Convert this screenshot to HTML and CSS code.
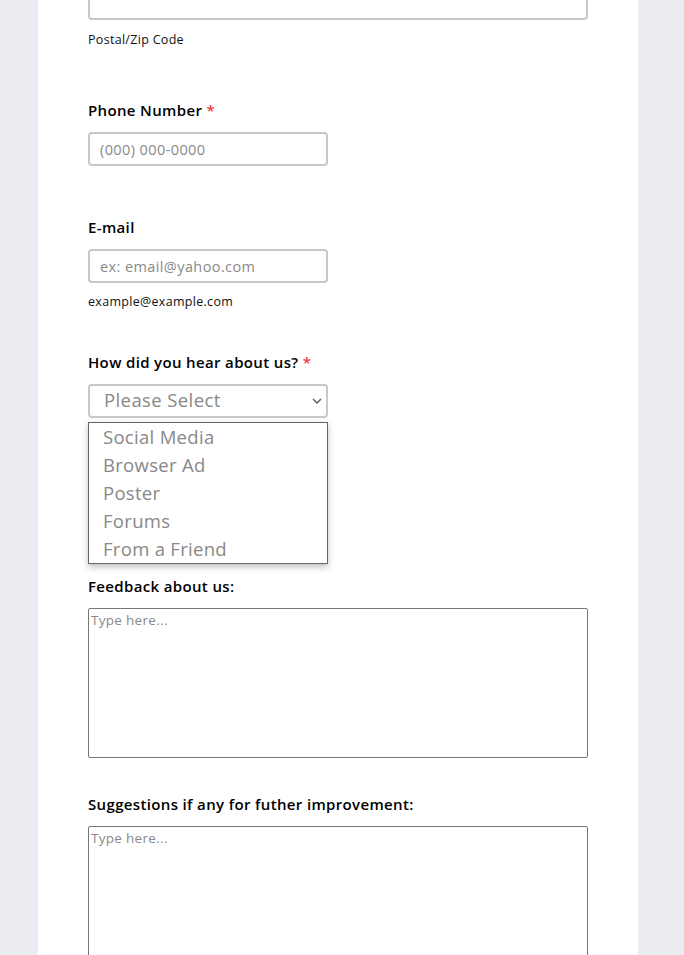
FILE: index.html
```html
<!DOCTYPE html>
<html>
<head>
	<meta http-equiv="Content-Type" content="text/html;charset=utf-8"/>
	<title>Feedback Form</title>
	<link rel="stylesheet" href="styles.css">
</head>
<body>
	<div class="form-card">
		<div class="field field-first">
			<input type="text" class="text-input wide">
			<div class="sublabel">Postal/Zip Code</div>
		</div>

		<div class="field field-phone">
			<label class="label">Phone Number <span class="req">*</span></label>
			<input type="text" class="text-input" placeholder="(000) 000-0000">
		</div>

		<div class="field field-email">
			<label class="label">E-mail</label>
			<input type="text" class="text-input" placeholder="ex: email@yahoo.com">
			<div class="sublabel">example@example.com</div>
		</div>

		<div class="field field-select">
			<label class="label">How did you hear about us? <span class="req">*</span></label>
			<div class="select-wrap">
				<div class="select-box">
					<span>Please Select</span>
					<svg class="chev" width="10" height="6" viewBox="0 0 10 6"><path d="M1 1l4 4 4-4" fill="none" stroke="#666" stroke-width="1.6"/></svg>
				</div>
				<ul class="select-menu">
					<li>Social Media</li>
					<li>Browser Ad</li>
					<li>Poster</li>
					<li>Forums</li>
					<li>From a Friend</li>
				</ul>
			</div>
		</div>

		<div class="field field-feedback">
			<label class="label">Feedback about us:</label>
			<textarea class="text-area" placeholder="Type here..."></textarea>
		</div>

		<div class="field field-suggest">
			<label class="label">Suggestions if any for futher improvement:</label>
			<textarea class="text-area" placeholder="Type here..."></textarea>
		</div>
	</div>
</body>
</html>
```
FILE: styles.css
```css
*{
	margin: 0;
	padding: 0;
	box-sizing: border-box;
}
body{
	background: #ebecf1;
	font-family: "Open Sans", "Liberation Sans", sans-serif;
	color: #000;
	overflow: hidden;
}
.form-card{
	display: flow-root;
	width: 600px;
	margin-left: 38px;
	height: 955px;
	background: #fff;
	padding: 0 50px;
}
.field{
	display: flex;
	flex-direction: column;
	align-items: flex-start;
	padding-top: 53px;
}
.field-first{
	padding-top: 0;
	margin-top: -14px;
}
.field-phone{
	padding-top: 52px;
}
.field-email{
	padding-top: 51px;
}
.field-select{
	padding-top: 42px;
}
.field-feedback{
	padding-top: 158px;
}
.field-suggest{
	padding-top: 36px;
}
.label{
	font-size: 15px;
	font-weight: 600;
	letter-spacing: 0.35px;
	line-height: 20px;
	margin-bottom: 12px;
}
.req{
	color: #f23a3c;
}
.sublabel{
	font-size: 12.5px;
	letter-spacing: 0.3px;
	line-height: 16px;
	margin-top: 11px;
	color: #111;
}
.field-first .sublabel{
	margin-top: 12px;
}
.text-input{
	width: 240px;
	height: 34px;
	border: 2px solid #c8c8c8;
	border-radius: 4px;
	padding: 0 10px;
	font-family: inherit;
	font-size: 14.5px;
	letter-spacing: 0.4px;
	color: #333;
	outline: none;
}
.text-input.wide{
	width: 500px;
}
.text-input::placeholder{
	color: #8a8a8a;
}
.select-wrap{
	position: relative;
	width: 240px;
}
.select-box{
	height: 34px;
	border: 2px solid #c8c8c8;
	border-radius: 4px;
	display: flex;
	align-items: center;
	justify-content: space-between;
	padding: 0 4px 3px 14px;
	font-size: 18.5px;
	letter-spacing: 0.4px;
	color: #888;
}
.chev{
	margin-top: 3px;
}
.select-menu{
	position: absolute;
	top: 38px;
	left: 0;
	width: 240px;
	list-style: none;
	background: #fff;
	border: 1px solid #666;
	box-shadow: 0 3px 6px rgba(0,0,0,.25);
	z-index: 2;
}
.select-menu li{
	font-size: 18.5px;
	letter-spacing: 0.3px;
	line-height: 28px;
	padding-left: 14px;
	color: #888;
}
.text-area{
	width: 500px;
	height: 150px;
	border: 1px solid #767676;
	border-radius: 2px;
	padding: 2px;
	font-family: inherit;
	font-size: 13.5px;
	letter-spacing: 0.3px;
	resize: none;
	outline: none;
}
.text-area::placeholder{
	color: #8a8a8a;
}
```
